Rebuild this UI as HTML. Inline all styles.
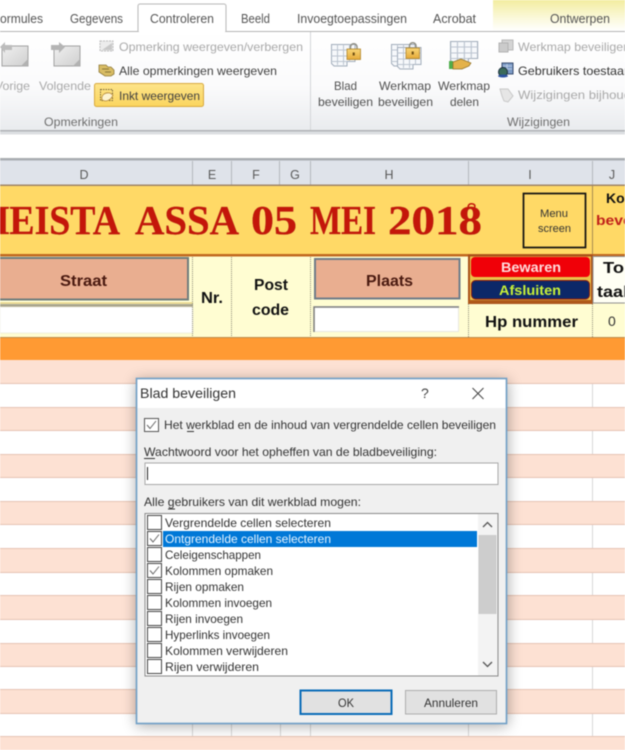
<!DOCTYPE html>
<html><head><meta charset="utf-8"><title>Blad beveiligen</title>
<style>
html,body{margin:0;padding:0;width:625px;height:750px;overflow:hidden;background:#fff}
svg{display:block;filter:blur(.45px)}
text{font-family:"Liberation Sans",sans-serif;font-size:12px;fill:#3a3a3a}
.tab{fill:#555;font-size:12.5px}
.rg{fill:#a9a9a9}
.rd{fill:#404040}
.gl{fill:#6e6e6e}
.h{fill:#5a5a5a;font-size:12.5px;text-anchor:middle}
.b{font-weight:bold;fill:#111;font-size:16px}
.t{font-family:"Liberation Serif",serif;font-weight:bold;font-size:41px;fill:#c4160a;stroke:#a82014;stroke-width:.3px}
.d{fill:#333;font-size:12px}
</style></head><body>
<svg width="625" height="750" viewBox="0 0 625 750" xmlns="http://www.w3.org/2000/svg">
<defs>
<linearGradient id="rib" x1="0" y1="0" x2="0" y2="1"><stop offset="0" stop-color="#fff"/><stop offset=".55" stop-color="#fbfbfc"/><stop offset="1" stop-color="#e9ebee"/></linearGradient>
<linearGradient id="ont" x1="0" y1="0" x2="0" y2="1"><stop offset="0" stop-color="#f3eda0"/><stop offset=".6" stop-color="#fbf9dc"/><stop offset="1" stop-color="#fff"/></linearGradient>
<linearGradient id="pg" x1="0" y1="0" x2="1" y2="1"><stop offset="0" stop-color="#f0f0f0"/><stop offset="1" stop-color="#cfcfcf"/></linearGradient>
<linearGradient id="lk" x1="0" y1="0" x2="0" y2="1"><stop offset="0" stop-color="#f8d678"/><stop offset="1" stop-color="#e6aa38"/></linearGradient>
<linearGradient id="ink" x1="0" y1="0" x2="0" y2="1"><stop offset="0" stop-color="#fde48a"/><stop offset="1" stop-color="#fbd55e"/></linearGradient>
<filter id="sh" x="-15%" y="-15%" width="130%" height="130%"><feGaussianBlur stdDeviation="7"/></filter>
<g id="grid">
<path d="M.5 .5H24V17.500H16V22H3L.5 19.500Z" fill="#f6f8fb" stroke="#a2adbb" stroke-width="1"/>
<path d="M.5 6H24M.5 12H24M.5 17.500H16M6.500 .5V21M12.500 .5V21M18.500 .5V17.500" stroke="#bcc5d0" stroke-width="1" fill="none"/>
</g>
<g id="lock">
<path d="M3.500 6V4a3.200 3.200 0 0 1 6.500 0V6" fill="none" stroke="#8f8f85" stroke-width="1.500"/>
<rect x="0" y="6" width="13.500" height="10.500" fill="url(#lk)" stroke="#b08428" stroke-width=".8"/>
<rect x="5.700" y="9.500" width="2" height="3" fill="#6a4a10"/>
</g>
<g id="chk"><path d="M-4 0 L-1 3.500 L5 -4" fill="none" stroke="#666" stroke-width="1"/></g>
</defs>

<!-- page -->
<rect width="625" height="750" fill="#fff"/>

<!-- ribbon -->
<rect x="0" y="31" width="625" height="100" fill="url(#rib)"/>
<rect x="493" y="0" width="132" height="31" fill="url(#ont)"/>
<rect x="0" y="31" width="625" height="1" fill="#b4b4b4"/>
<path d="M138 31.500V6a2 2 0 0 1 2-2H224a2 2 0 0 1 2 2V31.500" fill="#fff" stroke="#b8b8b8"/>
<rect x="139" y="30" width="86" height="3" fill="#fff"/>
<rect x="310" y="32" width="1" height="98" fill="#d4d6d9"/>
<rect x="0" y="130" width="625" height="1.500" fill="#b0b3b6"/>
<rect x="0" y="131.500" width="625" height="3" fill="#dcdfe2"/>
<rect x="0" y="158" width="625" height="2.500" fill="#a9adb1"/>

<text class="tab" x="0" y="23" textLength="43" lengthAdjust="spacingAndGlyphs">ormules</text>
<text class="tab" x="70" y="23" textLength="53" lengthAdjust="spacingAndGlyphs">Gegevens</text>
<text class="tab" x="150" y="23" textLength="64" lengthAdjust="spacingAndGlyphs">Controleren</text>
<text class="tab" x="241" y="23" textLength="29" lengthAdjust="spacingAndGlyphs">Beeld</text>
<text class="tab" x="297" y="23" textLength="110" lengthAdjust="spacingAndGlyphs">Invoegtoepassingen</text>
<text class="tab" x="433" y="23" textLength="43" lengthAdjust="spacingAndGlyphs">Acrobat</text>
<text class="tab" x="550" y="23" textLength="60" lengthAdjust="spacingAndGlyphs">Ontwerpen</text>

<!-- Vorige icon -->
<rect x="2" y="46" width="26" height="20" fill="url(#pg)" stroke="#a2a2a2"/>
<path d="M21 66L28 59V66Z" fill="#b2b2b2"/>
<path d="M0 47L5 42V45H12V50H5V53Z" fill="#bcbcbc"/>
<!-- Volgende icon -->
<rect x="54" y="46" width="26" height="20" fill="url(#pg)" stroke="#a2a2a2"/>
<path d="M73 66L80 59V66Z" fill="#b2b2b2"/>
<path d="M51 45H59V42L65 47L59 53V50H51Z" fill="#b4b4b4"/>
<text class="rg" x="-5" y="90" textLength="35" lengthAdjust="spacingAndGlyphs">Vorige</text>
<text class="rg" x="39" y="90" textLength="52" lengthAdjust="spacingAndGlyphs">Volgende</text>

<!-- small icons -->
<rect x="100" y="41" width="13" height="10" fill="#ececec" stroke="#bbb" stroke-dasharray="2 1"/>
<path d="M102 50L112 43V50Z" fill="#c8c8c8"/>
<text class="rg" x="119" y="51" textLength="184" lengthAdjust="spacingAndGlyphs">Opmerking weergeven/verbergen</text>

<path d="M99 65h7l2 2h3l3 3v4l-3 2h-6l-6-4z" fill="#d8bc64" stroke="#8f7a3a" stroke-width=".8"/>
<path d="M102 69h7M105 72h6" stroke="#8a7838" stroke-width="1"/>
<text class="rd" x="119" y="75" textLength="158" lengthAdjust="spacingAndGlyphs">Alle opmerkingen weergeven</text>

<rect x="94.500" y="83.500" width="109" height="23" rx="2" fill="url(#ink)" stroke="#d8a93e"/>
<rect x="100.500" y="89.500" width="12" height="11" fill="none" stroke="#77663a" stroke-dasharray="1.500 1"/>
<path d="M102 100c-1-5 3-8 8-7l3 2c-1 3-4 6-8 6z" fill="#fdf3d0" stroke="#b58a3a" stroke-width=".8"/>
<text class="rd" x="119" y="100" textLength="81" lengthAdjust="spacingAndGlyphs">Inkt weergeven</text>

<text class="gl" x="44" y="126" textLength="74" lengthAdjust="spacingAndGlyphs">Opmerkingen</text>

<!-- Blad -->
<use href="#grid" x="331" y="44"/>
<use href="#lock" x="347" y="43"/>
<!-- Werkmap -->
<use href="#grid" x="391" y="44"/>
<use href="#grid" x="397" y="47"/>
<use href="#lock" x="406" y="42"/>
<!-- Delen -->
<g transform="translate(450 41) scale(1.150 1)"><use href="#grid"/></g>
<path d="M449 61h4v8h-4z" fill="#4fae4a"/>
<path d="M453 62l8-3 10 4-2 3-7 3-9 0z" fill="#e4b24a" stroke="#8f7026" stroke-width=".7"/>

<text class="gl" x="334" y="90" textLength="23" lengthAdjust="spacingAndGlyphs" style="fill:#505050">Blad</text>
<text class="gl" x="318" y="106" textLength="55" lengthAdjust="spacingAndGlyphs" style="fill:#505050">beveiligen</text>
<text class="gl" x="379" y="90" textLength="52" lengthAdjust="spacingAndGlyphs" style="fill:#505050">Werkmap</text>
<text class="gl" x="378" y="106" textLength="55" lengthAdjust="spacingAndGlyphs" style="fill:#505050">beveiligen</text>
<text class="gl" x="438" y="90" textLength="52" lengthAdjust="spacingAndGlyphs" style="fill:#505050">Werkmap</text>
<text class="gl" x="450" y="106" textLength="29" lengthAdjust="spacingAndGlyphs" style="fill:#505050">delen</text>
<text class="gl" x="507" y="126" textLength="63" lengthAdjust="spacingAndGlyphs">Wijzigingen</text>

<!-- small right icons -->
<rect x="502" y="40" width="11" height="10" fill="#d4d4d4" stroke="#b8b8b8"/>
<rect x="499" y="43" width="9" height="9" fill="#cbcbcb" stroke="#b2b2b2"/>
<text class="rg" x="518" y="51" textLength="112" lengthAdjust="spacingAndGlyphs">Werkmap beveiligen</text>
<rect x="502" y="63" width="11" height="11" fill="#7d9cc8" stroke="#3a4e70"/>
<path d="M503 66h9M503 69h9M507 64v9" stroke="#c4d4e8" stroke-width=".8"/>
<circle cx="503" cy="72" r="4.500" fill="#3a6a5a" stroke="#1e3040"/>
<ellipse cx="503" cy="76" rx="5" ry="1.500" fill="#2a50a0"/>
<text class="rd" x="518" y="75" textLength="113" lengthAdjust="spacingAndGlyphs" style="fill:#333">Gebruikers toestaan</text>
<path d="M500 89h8l5 7-5 6-4-1-2-5z" fill="#e6e6e6" stroke="#c8c8c8"/>
<text class="rg" x="518" y="99" textLength="113" lengthAdjust="spacingAndGlyphs">Wijzigingen bijhoud</text>

<!-- column header -->
<rect x="0" y="160.500" width="625" height="24.500" fill="#dfe3ea"/>
<path d="M192.500 161V185M231.500 161V185M279.500 161V185M310.500 161V185M468.500 161V185M592.500 161V185" stroke="#b4b8be"/>
<text class="h" x="84" y="179">D</text>
<text class="h" x="212" y="179">E</text>
<text class="h" x="256" y="179">F</text>
<text class="h" x="295" y="179">G</text>
<text class="h" x="389" y="179">H</text>
<text class="h" x="530" y="179">I</text>
<text class="h" x="612" y="179">J</text>
<rect x="0" y="184.500" width="625" height="1.500" fill="#9f8468"/>

<!-- title band -->
<rect x="0" y="186" width="625" height="68" fill="#ffd966"/>
<rect x="592" y="186" width="1" height="68" fill="#a88c50"/>
<text class="t" x="-20" y="234" textLength="140" lengthAdjust="spacingAndGlyphs">HEISTA</text>
<text class="t" x="135" y="234" textLength="104" lengthAdjust="spacingAndGlyphs">ASSA</text>
<text class="t" x="251" y="234" textLength="46" lengthAdjust="spacingAndGlyphs">05</text>
<text class="t" x="310" y="234" textLength="66" lengthAdjust="spacingAndGlyphs">MEI</text>
<text class="t" x="388" y="234" textLength="94" lengthAdjust="spacingAndGlyphs">2018</text>
<path d="M469 209c-2-3 0-6 4-5 3 1 2 4 0 4" fill="none" stroke="#c4160a" stroke-width="1.500"/>
<rect x="523.500" y="193.500" width="62" height="54" fill="none" stroke="#111" stroke-width="1.700"/>
<text x="540" y="217" style="font-size:11px;fill:#333" textLength="28" lengthAdjust="spacingAndGlyphs">Menu</text>
<text x="538" y="232" style="font-size:11px;fill:#333" textLength="33" lengthAdjust="spacingAndGlyphs">screen</text>
<text x="606" y="203" style="font-size:14px;font-weight:bold;fill:#111">Ko</text>
<text x="596" y="225" style="font-size:14px;font-weight:bold;fill:#c0201a" textLength="40" lengthAdjust="spacingAndGlyphs">bevei</text>
<rect x="0" y="254" width="625" height="2.500" fill="#c2691f"/>

<!-- header rows -->
<rect x="0" y="256.500" width="625" height="80.500" fill="#fffdd2"/>
<rect x="-6" y="258" width="194" height="41.500" fill="#e9ae90" stroke="#6f7c7c" stroke-width="2"/>
<rect x="0" y="302.500" width="193" height="1" fill="#e0c870"/>
<rect x="0" y="304" width="193" height="3" fill="#a8a48c"/>
<rect x="0" y="307" width="193" height="26" fill="#fff" stroke="#ece9d8" stroke-width=".7"/>
<text x="60" y="286" class="b" style="fill:#4a1a10" textLength="47" lengthAdjust="spacingAndGlyphs">Straat</text>
<path d="M192.500 257V337M231.500 257V337M310.500 257V337M468.500 304V337M592.500 304V337" stroke="#8e8c78" stroke-dasharray="1 1"/>
<text x="201" y="303" class="b" textLength="22" lengthAdjust="spacingAndGlyphs">Nr.</text>
<text x="254" y="290" class="b" textLength="34" lengthAdjust="spacingAndGlyphs">Post</text>
<text x="252" y="315" class="b" textLength="37" lengthAdjust="spacingAndGlyphs">code</text>
<rect x="315" y="259" width="144.500" height="39.500" fill="#e9ae90" stroke="#6f7c88" stroke-width="2"/>
<text x="366" y="286" class="b" style="fill:#4a1a10" textLength="47" lengthAdjust="spacingAndGlyphs">Plaats</text>
<rect x="314.500" y="306.500" width="144" height="25" fill="#fff" stroke="#e8e8e0"/>
<path d="M314 332V307H459" fill="none" stroke="#7d7d7d" stroke-width="1.500"/>

<!-- buttons -->
<rect x="468" y="255" width="125" height="49" fill="#ebc24a"/>
<rect x="469" y="255.500" width="123" height="47.500" fill="none" stroke="#a8501a" stroke-width="2"/>
<rect x="471" y="257" width="119" height="20" rx="4" fill="#f00008"/>
<rect x="471.500" y="280.500" width="118" height="18.500" rx="4" fill="#0c2868" stroke="#8a1a10"/>
<rect x="468" y="300" width="125" height="3" fill="#b05a1a"/>
<text x="501" y="272" style="font-size:14px;font-weight:bold;fill:#fdd" textLength="60" lengthAdjust="spacingAndGlyphs">Bewaren</text>
<text x="499" y="295" style="font-size:14px;font-weight:bold;fill:#c8f038" textLength="62" lengthAdjust="spacingAndGlyphs">Afsluiten</text>
<rect x="593" y="256.500" width="40" height="46.500" fill="#fffff4" stroke="#8f8f8f" stroke-width="1"/>
<text x="603" y="273" class="b" textLength="21" lengthAdjust="spacingAndGlyphs">To</text>
<text x="597" y="297" class="b" textLength="31" lengthAdjust="spacingAndGlyphs">taal</text>
<text x="485" y="327" class="b" textLength="93" lengthAdjust="spacingAndGlyphs">Hp nummer</text>
<text x="608" y="326" style="font-size:14px;fill:#333">0</text>

<!-- orange -->
<rect x="0" y="337" width="625" height="1" fill="#bd8a4a"/>
<rect x="0" y="338" width="625" height="22" fill="#ff9a33"/>

<!-- striped rows -->
<rect x="0" y="360" width="625" height="390" fill="#fff"/>
<g fill="#fde1d3">
<rect x="0" y="360" width="625" height="23"/>
<rect x="0" y="407" width="625" height="24"/>
<rect x="0" y="454" width="625" height="23"/>
<rect x="0" y="501" width="625" height="24"/>
<rect x="0" y="548" width="625" height="24"/>
<rect x="0" y="595" width="625" height="24"/>
<rect x="0" y="643" width="625" height="23"/>
<rect x="0" y="690" width="625" height="23"/>
<rect x="0" y="737" width="625" height="13"/>
</g>
<g fill="#e6c4b4">
<rect x="0" y="383" width="625" height="1"/><rect x="0" y="407" width="625" height="1"/>
<rect x="0" y="430" width="625" height="1"/><rect x="0" y="454" width="625" height="1"/>
<rect x="0" y="477" width="625" height="1"/><rect x="0" y="501" width="625" height="1"/>
<rect x="0" y="524" width="625" height="1"/><rect x="0" y="548" width="625" height="1"/>
<rect x="0" y="572" width="625" height="1"/><rect x="0" y="595" width="625" height="1"/>
<rect x="0" y="619" width="625" height="1"/><rect x="0" y="643" width="625" height="1"/>
<rect x="0" y="666" width="625" height="1"/><rect x="0" y="689" width="625" height="1"/>
<rect x="0" y="713" width="625" height="1"/><rect x="0" y="736" width="625" height="1"/>
</g>
<g fill="#d8d8d8">
<rect x="592" y="384" width="1" height="23"/><rect x="592" y="431" width="1" height="23"/>
<rect x="592" y="478" width="1" height="23"/><rect x="592" y="525" width="1" height="23"/>
<rect x="592" y="573" width="1" height="22"/><rect x="592" y="620" width="1" height="23"/>
<rect x="592" y="667" width="1" height="22"/><rect x="592" y="714" width="1" height="22"/>
<path d="M192 714h1v22h-1zM231 714h1v22h-1zM280 714h1v22h-1zM310 714h1v22h-1zM468 714h1v22h-1z"/>
</g>

<!-- dialog shadow -->
<rect x="136" y="380" width="372" height="346" fill="#000" opacity=".33" filter="url(#sh)"/>

<!-- dialog -->
<rect x="136.500" y="378.500" width="370" height="345" fill="#f0f0f0" stroke="#6f9fc6" stroke-width="1.600"/>
<rect x="137.500" y="379.500" width="368" height="28.500" fill="#fff"/>
<text x="140" y="398" style="font-size:14px;fill:#333" textLength="96" lengthAdjust="spacingAndGlyphs">Blad beveiligen</text>
<text x="421" y="398" style="font-size:14px;fill:#444">?</text>
<path d="M472.500 388L483.500 399M483.500 388L472.500 399" stroke="#444" stroke-width="1"/>

<rect x="144.500" y="418.500" width="14" height="13" fill="#fff" stroke="#555"/>
<use href="#chk" x="151" y="425"/>
<text class="d" x="164" y="429" textLength="332" lengthAdjust="spacingAndGlyphs">Het werkblad en de inhoud van vergrendelde cellen beveiligen</text>
<rect x="187" y="431" width="7" height="1" fill="#333"/>
<text class="d" x="144" y="456" textLength="293" lengthAdjust="spacingAndGlyphs">Wachtwoord voor het opheffen van de bladbeveiliging:</text>
<rect x="144" y="458" width="11" height="1" fill="#333"/>
<rect x="145" y="463" width="353" height="21.500" fill="#fff" stroke="#a8a8a8"/>
<rect x="147" y="467" width="1" height="13" fill="#222"/>
<text class="d" x="144" y="506" textLength="217" lengthAdjust="spacingAndGlyphs">Alle gebruikers van dit werkblad mogen:</text>
<rect x="168" y="508.500" width="7" height="1" fill="#333"/>

<!-- list -->
<rect x="145" y="513.500" width="353" height="162.500" fill="#fff" stroke="#8a8a8a"/>
<rect x="478" y="514" width="19.500" height="161.500" fill="#f3f3f3"/>
<rect x="478.500" y="535" width="18" height="79" fill="#cdcdcd"/>
<path d="M483 527L487.500 522.500L492 527M483 662L487.500 666.500L492 662" fill="none" stroke="#555" stroke-width="1.300"/>
<rect x="163" y="531" width="314" height="16" fill="#0078d7"/>
<g fill="#fff" stroke="#444" stroke-width="1">
<rect x="147.500" y="515.500" width="14" height="14"/>
<rect x="147.500" y="531.500" width="14" height="14"/>
<rect x="147.500" y="547.500" width="14" height="14"/>
<rect x="147.500" y="563.500" width="14" height="14"/>
<rect x="147.500" y="579.500" width="14" height="14"/>
<rect x="147.500" y="595.500" width="14" height="14"/>
<rect x="147.500" y="611.500" width="14" height="14"/>
<rect x="147.500" y="627.500" width="14" height="14"/>
<rect x="147.500" y="643.500" width="14" height="14"/>
<rect x="147.500" y="659.500" width="14" height="14"/>
</g>
<use href="#chk" x="154" y="538.500"/>
<use href="#chk" x="154" y="570.500"/>
<text class="d" x="165" y="527" textLength="166" lengthAdjust="spacingAndGlyphs">Vergrendelde cellen selecteren</text>
<text class="d" x="165" y="543" textLength="166" lengthAdjust="spacingAndGlyphs" style="fill:#e6f4ff">Ontgrendelde cellen selecteren</text>
<text class="d" x="165" y="559" textLength="96" lengthAdjust="spacingAndGlyphs">Celeigenschappen</text>
<text class="d" x="165" y="575" textLength="108" lengthAdjust="spacingAndGlyphs">Kolommen opmaken</text>
<text class="d" x="165" y="591" textLength="79" lengthAdjust="spacingAndGlyphs">Rijen opmaken</text>
<text class="d" x="165" y="607" textLength="107" lengthAdjust="spacingAndGlyphs">Kolommen invoegen</text>
<text class="d" x="165" y="623" textLength="78" lengthAdjust="spacingAndGlyphs">Rijen invoegen</text>
<text class="d" x="165" y="639" textLength="105" lengthAdjust="spacingAndGlyphs">Hyperlinks invoegen</text>
<text class="d" x="165" y="655" textLength="123" lengthAdjust="spacingAndGlyphs">Kolommen verwijderen</text>
<text class="d" x="165" y="671" textLength="94" lengthAdjust="spacingAndGlyphs">Rijen verwijderen</text>

<!-- buttons -->
<rect x="300.500" y="690.500" width="91" height="23.500" fill="#e1e1e1" stroke="#0a6cb8" stroke-width="2"/>
<text class="d" x="338" y="707" textLength="16" lengthAdjust="spacingAndGlyphs">OK</text>
<rect x="405.500" y="690.500" width="91" height="23.500" fill="#e1e1e1" stroke="#adadad"/>
<text class="d" x="424" y="707" textLength="54" lengthAdjust="spacingAndGlyphs">Annuleren</text>
</svg>
</body></html>
